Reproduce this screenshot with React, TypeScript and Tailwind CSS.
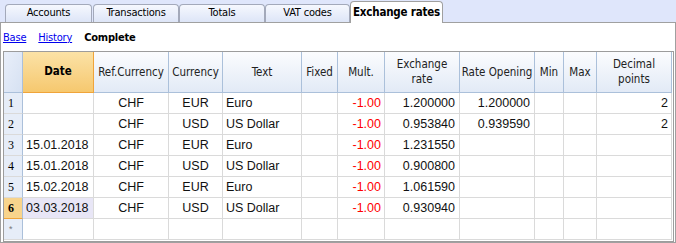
import React from "react";

const ui = "font-['DejaVu_Sans_Condensed','DejaVu_Sans',sans-serif] font-stretch-condensed";

type Row = {
  n: string;
  date: string;
  ref: string;
  cur: string;
  text: string;
  mult: string;
  ex: string;
  op: string;
  dec: string;
};

const rows: Row[] = [
  { n: "1", date: "", ref: "CHF", cur: "EUR", text: "Euro", mult: "-1.00", ex: "1.200000", op: "1.200000", dec: "2" },
  { n: "2", date: "", ref: "CHF", cur: "USD", text: "US Dollar", mult: "-1.00", ex: "0.953840", op: "0.939590", dec: "2" },
  { n: "3", date: "15.01.2018", ref: "CHF", cur: "EUR", text: "Euro", mult: "-1.00", ex: "1.231550", op: "", dec: "" },
  { n: "4", date: "15.01.2018", ref: "CHF", cur: "USD", text: "US Dollar", mult: "-1.00", ex: "0.900800", op: "", dec: "" },
  { n: "5", date: "15.02.2018", ref: "CHF", cur: "EUR", text: "Euro", mult: "-1.00", ex: "1.061590", op: "", dec: "" },
  { n: "6", date: "03.03.2018", ref: "CHF", cur: "USD", text: "US Dollar", mult: "-1.00", ex: "0.930940", op: "", dec: "" },
  { n: "*", date: "", ref: "", cur: "", text: "", mult: "", ex: "", op: "", dec: "" },
];

const hdr =
  "h-[41px] flex items-center justify-center text-center leading-[15px] text-[11.5px] text-[#222] whitespace-nowrap border-r border-b border-r-[#abc0da] border-b-[#abc0da] bg-gradient-to-b from-[#fbfcfe] to-[#e2eaf6] " +
  ui;

const cell = "h-[21px] leading-[20px] border-r border-b border-[#dadada] text-[12.5px] text-[#111] font-['Liberation_Sans'] whitespace-nowrap overflow-hidden";

function Tab({ label, w }: { label: string; w: string }) {
  return (
    <div
      className={`${w} h-[18px] rounded-t-[4px] border border-b-0 border-[#a3a9ba] bg-gradient-to-b from-[#f6f8fe] to-[#dde5f7] flex items-center justify-center text-[11px] tracking-[-0.2px] whitespace-nowrap text-black ${ui}`}
    >
      {label}
    </div>
  );
}

export default function App() {
  return (
    <div className="w-[676px] h-[243px] bg-white overflow-hidden">
      {/* tab strip */}
      <div className="h-[23px] bg-[#dfe6fb] border-b border-[#a0a0a0] flex items-end pl-[5px]">
        <Tab label="Accounts" w="w-[87px]" />
        <div className="w-[1px]" />
        <Tab label="Transactions" w="w-[86px]" />
        <Tab label="Totals" w="w-[86px]" />
        <Tab label="VAT codes" w="w-[85px]" />
        <div
          className={`w-[93px] h-[22px] -mb-px rounded-t-[4px] border border-b-0 border-[#a0a0a0] bg-white flex items-start justify-center pt-[2px] text-[11.5px] tracking-[-0.2px] whitespace-nowrap font-bold text-black ${ui}`}
        >
          Exchange rates
        </div>
      </div>
      {/* panel */}
      <div className="h-[220px] border-l border-r border-b border-[#a0a0a0] pl-[2px] pr-[1px]">
        <div className={`h-[28px] flex items-center gap-[12px] pl-0 pt-[2px] text-[11px] tracking-[-0.2px] ${ui}`}>
          <span className="text-[#0000ee] underline">Base</span>
          <span className="text-[#0000ee] underline">History</span>
          <span className="font-bold text-black">Complete</span>
        </div>
        <div className="border border-[#9c9c9c] pr-[1px] h-[191px]">
          <div className="grid grid-cols-[19px_71px_75px_54px_79px_36px_47px_75px_75px_29px_33px_75px]">
            {/* header */}
            <div className="h-[41px] border-r border-b border-[#abc0da] bg-gradient-to-br from-[#e9effa] to-[#d6e1f2]" />
            <div
              className={`h-[41px] flex items-center justify-center text-[11.5px] font-bold text-black border-r border-b border-[#f0a43a] bg-gradient-to-b from-[#fbe2a6] to-[#f6c86e] ${ui}`}
            >
              Date
            </div>
            <div className={hdr}>Ref.Currency</div>
            <div className={hdr}>Currency</div>
            <div className={hdr}>Text</div>
            <div className={hdr}>Fixed</div>
            <div className={hdr}>Mult.</div>
            <div className={hdr}>
              Exchange
              <br />
              rate
            </div>
            <div className={hdr}>Rate Opening</div>
            <div className={hdr}>Min</div>
            <div className={hdr}>Max</div>
            <div className={hdr}>
              Decimal
              <br />
              points
            </div>
            {/* rows */}
            {rows.map((r) => {
              const sel = r.n === "6";
              const star = r.n === "*";
              return (
                <React.Fragment key={r.n}>
                  <div
                    className={
                      sel
                        ? "h-[21px] leading-[20px] border-r border-b border-r-[#abc0da] border-b-[#f0a43a] bg-[#f8d48c] font-['Liberation_Serif'] font-bold text-[12px] text-black pl-[4px]"
                        : star
                        ? "h-[21px] leading-[20px] border-r border-b border-r-[#abc0da] border-b-[#dadada] bg-[#e6edf8] font-['Liberation_Sans'] text-[9px] text-[#777] pl-[5px]"
                        : "h-[21px] leading-[20px] border-r border-b border-r-[#abc0da] border-b-[#dadada] bg-[#e6edf8] font-['Liberation_Serif'] text-[12px] text-black pl-[4px]"
                    }
                  >
                    {r.n}
                  </div>
                  <div className={`${cell} pl-[3px] ${sel ? "bg-[#e8e6f6]" : ""}`}>{r.date}</div>
                  <div className={`${cell} text-center`}>{r.ref}</div>
                  <div className={`${cell} text-center`}>{r.cur}</div>
                  <div className={`${cell} pl-[3px]`}>{r.text}</div>
                  <div className={cell} />
                  <div className={`${cell} text-right pr-[3px] !text-[#ff0000]`}>{r.mult}</div>
                  <div className={`${cell} text-right pr-[4px]`}>{r.ex}</div>
                  <div className={`${cell} text-right pr-[4px]`}>{r.op}</div>
                  <div className={cell} />
                  <div className={cell} />
                  <div className={`${cell} text-right pr-[3px]`}>{r.dec}</div>
                </React.Fragment>
              );
            })}
          </div>
        </div>
      </div>
    </div>
  );
}
